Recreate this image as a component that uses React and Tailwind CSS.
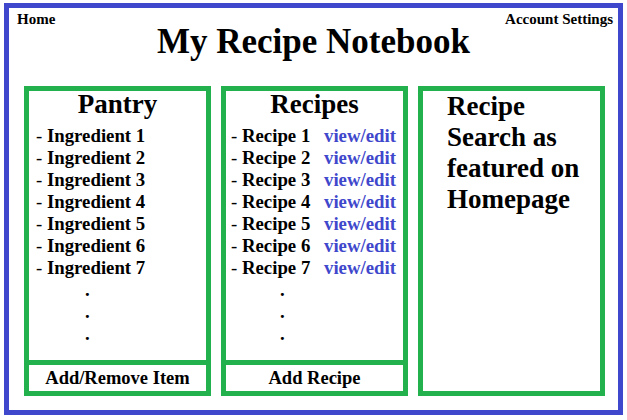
import React from 'react';

const ingredients = [1, 2, 3, 4, 5, 6, 7];
const recipes = [1, 2, 3, 4, 5, 6, 7];

function Dots() {
  return (
    <div className="pl-[49px]">
      <div>.</div>
      <div>.</div>
      <div>.</div>
    </div>
  );
}

export default function App() {
  return (
    <div className="w-[627px] h-[420px] bg-white pt-[3px] pl-[4px] text-black font-bold font-['Liberation_Serif','Times_New_Roman',serif]">
      <div className="w-[619px] h-[412px] border-[5px] border-[#3F48CC] flex flex-col">
        {/* Header */}
        <div className="pt-[2px] pl-[8px] pr-[5px] flex justify-between text-[15px] leading-[18px] h-[20px]">
          <span>Home</span>
          <span>Account Settings</span>
        </div>
        <h1 className="-mt-[6px] text-center text-[35px] leading-[40px]">My Recipe Notebook</h1>

        {/* Panels */}
        <div className="mt-[24px] pl-[15px] flex gap-[10px]">
          {/* Pantry */}
          <div className="w-[187px] h-[310px] border-[5px] border-[#22B14C] flex flex-col">
            <div className="flex-1">
              <h2 className="text-center text-[27px] leading-[26px]">Pantry</h2>
              <ul className="mt-[8px] pl-[7px] text-[18.8px] leading-[22px]">
                {ingredients.map((n) => (
                  <li key={n}><span className="font-normal">- </span>Ingredient {n}</li>
                ))}
                <li><Dots /></li>
              </ul>
            </div>
            <div className="h-[31px] border-t-[5px] border-[#22B14C] text-center text-[18.5px] leading-[26px]">Add/Remove Item</div>
          </div>

          {/* Recipes */}
          <div className="w-[187px] h-[310px] border-[5px] border-[#22B14C] flex flex-col">
            <div className="flex-1">
              <h2 className="text-center text-[27px] leading-[26px]">Recipes</h2>
              <ul className="mt-[8px] pl-[5px] text-[18.8px] leading-[22px]">
                {recipes.map((n) => (
                  <li key={n} className="flex">
                    <span className="w-[93px]"><span className="font-normal">- </span>Recipe {n}</span>
                    <span className="text-[#3F48CC]">view/edit</span>
                  </li>
                ))}
                <li><Dots /></li>
              </ul>
            </div>
            <div className="h-[31px] border-t-[5px] border-[#22B14C] text-center text-[18.5px] leading-[26px]">Add Recipe</div>
          </div>

          {/* Search */}
          <div className="w-[187px] h-[310px] border-[5px] border-[#22B14C] pl-[24px] text-[27px] leading-[31px]">
            Recipe<br />Search as<br />featured on<br />Homepage
          </div>
        </div>
      </div>
    </div>
  );
}
